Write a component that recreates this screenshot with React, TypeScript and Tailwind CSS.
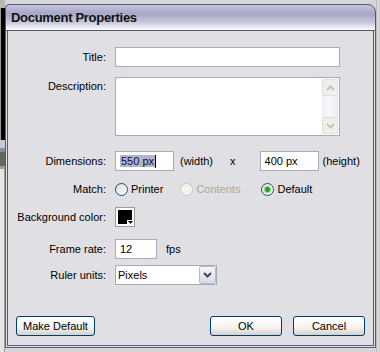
import { ReactNode } from "react"

const font = { fontFamily: '"Liberation Sans", Arial, sans-serif' }

function Label({ children, top = false }: { children: ReactNode; top?: boolean }) {
  return (
    <div className={`w-[98px] mr-[9px] text-right shrink-0 ${top ? "self-start pt-[1px]" : ""}`}>
      {children}
    </div>
  )
}

function TextBox({ width, value }: { width: string; value?: ReactNode }) {
  return (
    <div
      className={`${width} h-[20px] bg-white border border-[#a5acb5] flex items-center px-[4px] shrink-0`}
    >
      {value}
    </div>
  )
}

function Radio({ checked = false, disabled = false }: { checked?: boolean; disabled?: boolean }) {
  return (
    <span
      className={`w-[13px] h-[13px] rounded-full border flex items-center justify-center shrink-0 ${
        disabled
          ? "border-[#cac8bb] bg-[#f4f3ee]"
          : "border-[#1c5180] bg-[linear-gradient(135deg,#dcdcd7,#ffffff)]"
      }`}
    >
      {checked && <span className="w-[5px] h-[5px] rounded-full bg-[#21a121] shadow-[0_0_1px_1px_#8ed88e]" />}
    </span>
  )
}

function XpButton({ children, width }: { children: ReactNode; width: string }) {
  return (
    <button
      className={`${width} h-[20px] rounded-[3px] border border-[#003c74] bg-[linear-gradient(to_bottom,#ffffff,#f3f3ef_60%,#d6d0c5)] text-[11px] text-black leading-none`}
    >
      {children}
    </button>
  )
}

function Chevron({ up = false, color }: { up?: boolean; color: string }) {
  return (
    <svg width="9" height="6" viewBox="0 0 9 6">
      <path
        d={up ? "M1 5 L4.5 1.5 L8 5" : "M1 1 L4.5 4.5 L8 1"}
        fill="none"
        stroke={color}
        strokeWidth="2"
      />
    </svg>
  )
}

export default function App() {
  return (
    <div className="w-[380px] h-[352px] bg-[#d6d6d6] flex overflow-hidden" style={font}>
      {/* backdrop window on the left */}
      <div className="w-[5px] flex flex-col shrink-0">
        <div className="h-[8px] bg-[#b8b8b8]" />
        <div className="h-[132px] bg-black border-l border-[#9a9a9a]" />
        <div className="h-[8px] bg-[#c8c8d8]" />
        <div className="h-[4px] bg-[#8a8a9a]" />
        <div className="h-[14px] bg-[#5d6b5d]" />
        <div className="h-[3px] bg-[#9aa09a]" />
        <div className="flex-1 bg-[#e4e4e4] border-r border-[#a0a0a0]" />
      </div>

      {/* dialog */}
      <div className="w-[371px] h-[344px] mt-[4px] flex flex-col shrink-0">
        <div className="h-[27px] rounded-tl-[4px] rounded-tr-[8px] border-t border-x border-b border-[#55557a] bg-[linear-gradient(to_bottom,#c4c4da,#a7a7c6_35%,#c8c8dc_70%,#ffffff)] flex items-center pl-[5px]">
          <span className="text-[13px] font-bold tracking-[-0.3px] text-[#111]">Document Properties</span>
        </div>

        <div className="flex-1 bg-[#e0dfe3] border-x-[3px] border-b-[3px] border-double border-[#5a5a80] flex flex-col text-[11px] text-black">
          <div className="flex items-center mt-[16px] h-[20px]">
            <Label>Title:</Label>
            <TextBox width="w-[225px]" />
          </div>

          <div className="flex mt-[10px] h-[59px]">
            <Label top>Description:</Label>
            <div className="w-[225px] h-[59px] bg-white border border-[#a5acb5] flex justify-end p-[1px]">
              <div className="w-[16px] flex flex-col bg-[linear-gradient(to_right,#eef0f8,#f8f8fc,#e8e8f2)]">
                <div className="h-[17px] bg-[#f0efea] border border-[#e2e1d8] rounded-[2px] flex items-center justify-center">
                  <Chevron up color="#c4c3bc" />
                </div>
                <div className="flex-1" />
                <div className="h-[17px] bg-[#f0efea] border border-[#e2e1d8] rounded-[2px] flex items-center justify-center">
                  <Chevron color="#c4c3bc" />
                </div>
              </div>
            </div>
          </div>

          <div className="flex items-center mt-[15px] h-[20px]">
            <Label>Dimensions:</Label>
            <TextBox
              width="w-[59px]"
              value={
                <span className="flex items-center">
                  <span className="bg-[#b2b4cc] text-[#10103a] px-[1px] leading-[12px]">550 px</span>
                  <span className="w-[1px] h-[13px] bg-black" />
                </span>
              }
            />
            <span className="ml-[6px]">(width)</span>
            <span className="ml-[17px]">x</span>
            <div className="ml-[24px]">
              <TextBox width="w-[59px]" value="400 px" />
            </div>
            <span className="ml-[4px]">(height)</span>
          </div>

          <div className="flex items-center mt-[8px] h-[20px]">
            <Label>Match:</Label>
            <Radio />
            <span className="ml-[3px]">Printer</span>
            <div className="ml-[17px] flex items-center">
              <Radio disabled />
              <span className="ml-[3px] text-[#aca899]">Contents</span>
            </div>
            <div className="ml-[21px] flex items-center">
              <Radio checked />
              <span className="ml-[3px]">Default</span>
            </div>
          </div>

          <div className="flex items-center mt-[8px] h-[20px]">
            <Label>Background color:</Label>
            <div className="relative w-[20px] h-[20px] bg-white border border-[#9c9c9c] p-[2px]">
              <div className="w-full h-full bg-black" />
              <div className="absolute right-[1px] bottom-[1px] w-[6px] h-[5px] bg-white flex items-center justify-center">
                <svg width="5" height="3" viewBox="0 0 5 3">
                  <path d="M0 0 L5 0 L2.5 3 Z" fill="#000" />
                </svg>
              </div>
            </div>
          </div>

          <div className="flex items-center mt-[12px] h-[20px]">
            <Label>Frame rate:</Label>
            <TextBox width="w-[42px]" value="12" />
            <span className="ml-[9px]">fps</span>
          </div>

          <div className="flex items-center mt-[6px] h-[20px]">
            <Label>Ruler units:</Label>
            <div className="w-[102px] h-[20px] bg-white border border-[#a5acb5] flex items-center pl-[2px]">
              <span className="flex-1">Pixels</span>
              <div className="w-[17px] h-full bg-[linear-gradient(to_bottom,#f6f6fa,#d8dae6)] border border-[#b4bccc] rounded-[2px] flex items-center justify-center">
                <Chevron color="#3c4660" />
              </div>
            </div>
          </div>

          <div className="flex items-center justify-between mt-auto mb-[9px] px-[8px]">
            <XpButton width="w-[79px]">Make Default</XpButton>
            <div className="flex gap-[11px]">
              <XpButton width="w-[72px]">OK</XpButton>
              <XpButton width="w-[72px]">Cancel</XpButton>
            </div>
          </div>
        </div>
      </div>

      <div className="flex-1 bg-[#d4d4d4] border-l border-[#bdbdbd]" />
    </div>
  )
}
